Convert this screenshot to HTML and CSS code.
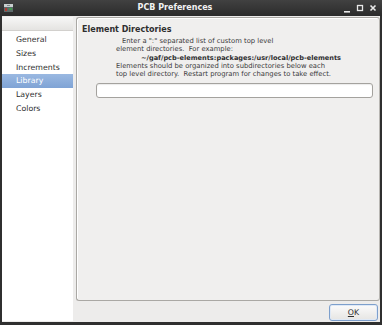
FILE: index.html
```html
<!DOCTYPE html>
<html>
<head>
<meta charset="utf-8">
<link rel="stylesheet" href="styles.css">
</head>
<body>
<div class="window">
  <div class="titlebar">
    <div class="tb-left">
      <svg class="app-icon" width="9" height="8" viewBox="0 0 9 8">
        <rect x="0" y="0" width="9" height="3" fill="#c9cfcf"/>
        <rect x="0" y="3" width="9" height="5" fill="#5d6a6a"/>
        <rect x="1" y="4" width="2" height="3" fill="#b33a2e"/>
        <rect x="5" y="4" width="3" height="2" fill="#3f9a4c"/>
        <rect x="3" y="1" width="3" height="1" fill="#7f8a8a"/>
      </svg>
    </div>
    <div class="title">PCB Preferences</div>
    <div class="tb-right">
      <svg width="8" height="10" viewBox="0 0 8 10"><rect x="1" y="8" width="6" height="1.6" fill="#e8e8e8"/></svg>
      <svg width="8" height="10" viewBox="0 0 8 10"><rect x="1.5" y="2.5" width="5" height="5" fill="none" stroke="#e8e8e8" stroke-width="1.3"/></svg>
      <svg width="8" height="10" viewBox="0 0 8 10"><path d="M1.5 2.5 L6.5 7.5 M6.5 2.5 L1.5 7.5" stroke="#e8e8e8" stroke-width="1.6"/></svg>
    </div>
  </div>
  <div class="content">
    <div class="sidebar">
      <div class="list-header"></div>
      <ul class="nav">
        <li>General</li>
        <li>Sizes</li>
        <li>Increments</li>
        <li class="selected">Library</li>
        <li>Layers</li>
        <li>Colors</li>
      </ul>
    </div>
    <div class="main">
      <div class="frame">
        <div class="heading">Element Directories</div>
        <div class="desc">
          <div class="l1">Enter a ":" separated list of custom top level</div>
          <div>element directories.&nbsp; For example:</div>
          <div class="l3">~/gaf/pcb-elements:packages:/usr/local/pcb-elements</div>
          <div>Elements should be organized into subdirectories below each</div>
          <div>top level directory.&nbsp; Restart program for changes to take effect.</div>
        </div>
        <div class="entry"></div>
      </div>
      <div class="buttons">
        <button class="btn"><u>O</u>K</button>
      </div>
    </div>
  </div>
</div>
</body>
</html>
```

FILE: styles.css
```css
html, body {
  margin: 0;
  padding: 0;
}
body {
  width: 382px;
  height: 325px;
  overflow: hidden;
  background: #2f2f2f;
  font-family: "DejaVu Sans", "Liberation Sans", sans-serif;
  color: #2e2e2e;
}
.window {
  display: flex;
  flex-direction: column;
  height: 325px;
}
.titlebar {
  height: 16px;
  flex: 0 0 16px;
  display: flex;
  align-items: center;
  background: linear-gradient(#414141, #2b2b2b);
}
.tb-left {
  width: 16px;
  display: flex;
  align-items: center;
  padding-left: 4px;
  box-sizing: border-box;
}
.app-icon {
  display: block;
}
.title {
  flex: 1;
  text-align: center;
  color: #f2f2f2;
  font-weight: bold;
  font-size: 8px;
  line-height: 16px;
  padding-right: 3px;
}
.tb-right {
  width: 45px;
  display: flex;
  justify-content: flex-end;
  gap: 5px;
  padding-right: 5px;
  box-sizing: border-box;
}
.tb-right svg {
  display: block;
}
.content {
  flex: 1;
  display: flex;
  background: #edeceb;
  margin: 0 2px 3px 2px;
  padding-top: 1px;
}
.sidebar {
  width: 71px;
  background: #ffffff;
  margin-bottom: 1px;
}
.list-header {
  height: 13px;
  background: linear-gradient(#f7f7f6, #e4e3e1);
  border-bottom: 1px solid #d2d0cd;
}
.nav {
  list-style: none;
  margin: 2px 0 0 0;
  padding: 0;
}
.nav li {
  height: 13.75px;
  line-height: 13.75px;
  font-size: 7.8px;
  padding-left: 14px;
  color: #2e2e2e;
}
.nav li.selected {
  background: linear-gradient(#9ab8e1, #7fa3d5);
  color: #ffffff;
}
.main {
  flex: 1;
  display: flex;
  flex-direction: column;
  margin-left: 3px;
}
.frame {
  flex: 1;
  border: 1px solid #aaa8a4;
  border-right-color: #b8b6b2;
  border-radius: 3px;
  background: #f0efee;
  box-shadow: inset 1px 1px 0 #ffffff;
  padding: 7px 2px 0 5px;
  margin-right: 0;
}
.heading {
  font-weight: bold;
  font-size: 8px;
  line-height: 10px;
  color: #2e2e2e;
}
.desc {
  margin: 2px 0 0 34px;
  font-size: 6.8px;
  line-height: 8.3px;
  color: #3a3a3a;
  white-space: nowrap;
}
.desc .l1 {
  padding-left: 6px;
}
.desc .l3 {
  padding-left: 25px;
  font-weight: bold;
  font-size: 6.6px;
  color: #2e2e2e;
}
.entry {
  margin: 5px 4px 0 14px;
  height: 13px;
  background: #ffffff;
  border: 1px solid #a4a29e;
  border-radius: 3px;
  box-shadow: inset 0 1px 1px rgba(0,0,0,0.08);
}
.buttons {
  height: 21px;
  display: flex;
  justify-content: flex-end;
  align-items: center;
  padding-right: 2px;
}
.btn {
  width: 49px;
  height: 17px;
  margin-top: 1px;
  border: 1px solid #7d9fcc;
  border-radius: 3px;
  background: linear-gradient(#fbfbfb, #e6e5e3);
  font-family: "DejaVu Sans", "Liberation Sans", sans-serif;
  font-size: 7.8px;
  color: #2e2e2e;
  padding: 0;
  box-shadow: inset 0 0 0 1px #dfe9f6;
}
.btn u {
  text-decoration-thickness: 1px;
  text-underline-offset: 1px;
}
```
